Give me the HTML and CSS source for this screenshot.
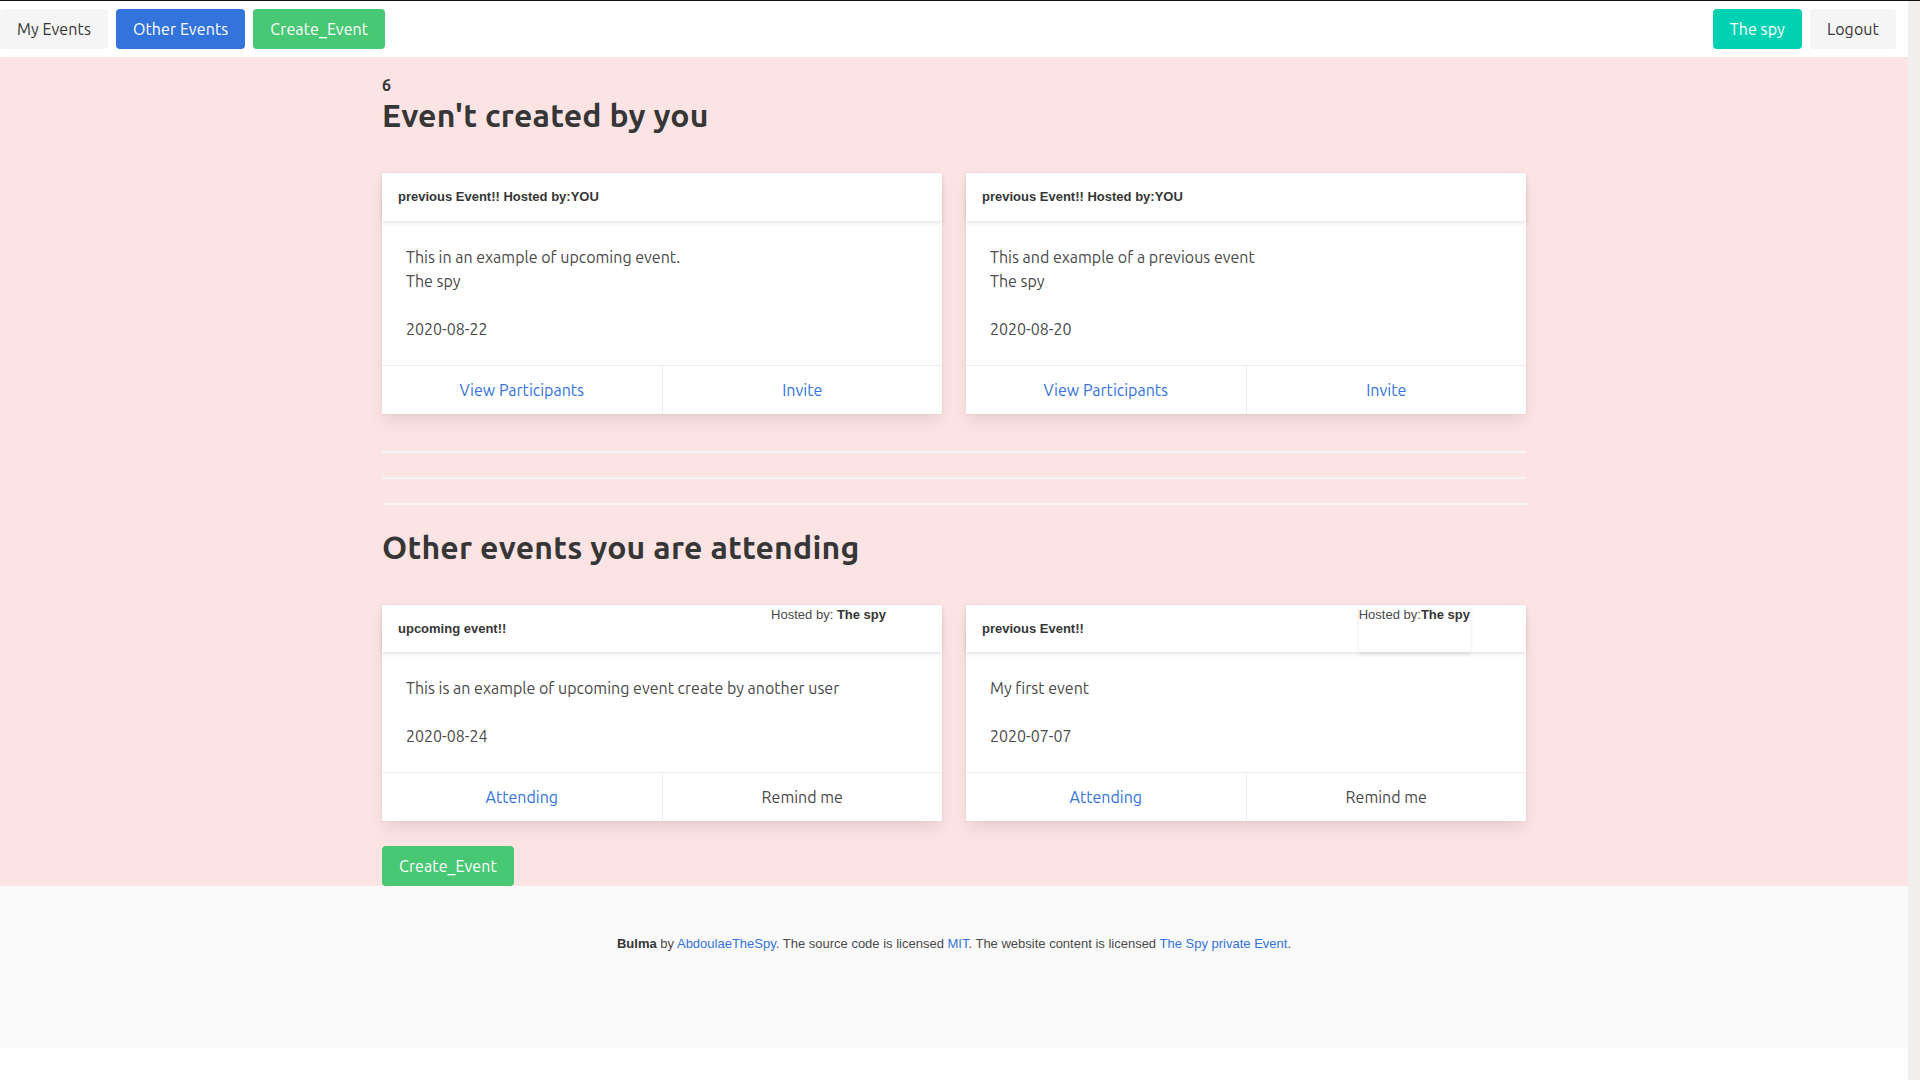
FILE: index.html
```html
<!DOCTYPE html>
<html lang="en">
<head>
<meta charset="utf-8">
<title>Events</title>
<link rel="stylesheet" href="styles.css">
</head>
<body>
<nav class="navbar">
  <div class="nav-group">
    <a class="btn btn-light">My Events</a>
    <a class="btn btn-link">Other Events</a>
    <a class="btn btn-success">Create_Event</a>
  </div>
  <div class="nav-group">
    <a class="btn btn-primary">The spy</a>
    <a class="btn btn-light">Logout</a>
  </div>
</nav>

<section class="page">
  <div class="container">
    <p class="count">6</p>
    <h1 class="title">Even't created by you</h1>

    <div class="cards">
      <div class="card">
        <header class="card-header">
          <p class="card-header-title">previous Event!! Hosted by:YOU</p>
        </header>
        <div class="card-content">
          This in an example of upcoming event.<br>The spy<br><br>2020-08-22
        </div>
        <footer class="card-footer">
          <a class="card-footer-item link">View Participants</a>
          <a class="card-footer-item link">Invite</a>
        </footer>
      </div>
      <div class="card">
        <header class="card-header">
          <p class="card-header-title">previous Event!! Hosted by:YOU</p>
        </header>
        <div class="card-content">
          This and example of a previous event<br>The spy<br><br>2020-08-20
        </div>
        <footer class="card-footer">
          <a class="card-footer-item link">View Participants</a>
          <a class="card-footer-item link">Invite</a>
        </footer>
      </div>
    </div>

    <div class="dividers">
      <hr class="divider">
      <hr class="divider">
      <hr class="divider">
    </div>

    <h1 class="title">Other events you are attending</h1>

    <div class="cards">
      <div class="card">
        <header class="card-header">
          <p class="card-header-title">upcoming event!!</p>
          <div class="host">Hosted by: <b>The spy</b></div>
        </header>
        <div class="card-content">
          This is an example of upcoming event create by another user<br><br>2020-08-24
        </div>
        <footer class="card-footer">
          <a class="card-footer-item link">Attending</a>
          <a class="card-footer-item">Remind me</a>
        </footer>
      </div>
      <div class="card">
        <header class="card-header">
          <p class="card-header-title">previous Event!!</p>
          <div class="host host-box">Hosted by:<b>The spy</b></div>
        </header>
        <div class="card-content">
          My first event<br><br>2020-07-07
        </div>
        <footer class="card-footer">
          <a class="card-footer-item link">Attending</a>
          <a class="card-footer-item">Remind me</a>
        </footer>
      </div>
    </div>

    <a class="btn btn-success create-bottom">Create_Event</a>
  </div>
</section>

<footer class="footer">
  <p><strong>Bulma</strong> by <a class="link">AbdoulaeTheSpy</a>. The source code is licensed <a class="link">MIT</a>. The website content is licensed <a class="link">The Spy private Event</a>.</p>
</footer>
</body>
</html>
```

FILE: styles.css
```css
html {
  background: #f0efee;
  border-top: 1px solid #111;
}

body {
  margin: 0;
  width: 1908px;
  min-height: calc(100vh - 1px);
  background: #fff;
  font-family: Ubuntu, Lato, "Noto Sans", sans-serif;
  font-size: 16px;
  line-height: 1.5;
  color: #4a4a4a;
}

p, h1 { margin: 0; }

a { text-decoration: none; cursor: pointer; }

.link { color: #3273dc; }

/* Navbar */
.navbar {
  height: 56px;
  display: flex;
  align-items: center;
  justify-content: space-between;
  padding-right: 12px;
  background: #fff;
}

.nav-group {
  display: flex;
  gap: 8px;
}

.btn {
  box-sizing: border-box;
  height: 40px;
  display: inline-flex;
  align-items: center;
  justify-content: center;
  padding: 0 16px;
  border: 1px solid transparent;
  border-radius: 4px;
  font-size: 16px;
  line-height: 1.5;
  letter-spacing: 0.1px;
}

.btn-light { background: #f5f5f5; color: #363636; }
.btn-link { background: #3273dc; color: #fff; }
.btn-success { background: #48c774; color: #fff; }
.btn-primary { background: #00d1b2; color: #fff; }

/* Page */
.page {
  background: #fde4e4;
  padding-top: 16px;
}

.container {
  width: 1144px;
  margin: 0 auto;
}

.count {
  font-size: 16px;
  line-height: 24px;
  font-weight: 700;
  color: #363636;
}

.title {
  font-size: 32px;
  line-height: 36px;
  font-weight: 700;
  letter-spacing: 0.2px;
  color: #363636;
  margin-bottom: 40px;
}

.cards {
  display: grid;
  grid-template-columns: 1fr 1fr;
  gap: 24px;
}

.card {
  background: #fff;
  box-shadow: 0 8px 16px -2px rgba(10, 10, 10, 0.1), 0 0 0 1px rgba(10, 10, 10, 0.02);
}

.card-header {
  display: flex;
  align-items: stretch;
  height: 47.5px;
  box-shadow: 0 2px 4px rgba(10, 10, 10, 0.1);
}

.card-header-title {
  flex: 1;
  display: flex;
  align-items: center;
  padding: 0 16px;
  font-family: "Liberation Sans", Arial, sans-serif;
  font-size: 13px;
  font-weight: 700;
  color: #363636;
}

.host {
  align-self: flex-start;
  margin-right: 56px;
  font-family: "Liberation Sans", Arial, sans-serif;
  font-size: 13px;
  line-height: 19.5px;
  color: #4a4a4a;
}

.host b { color: #363636; }

.host-box {
  align-self: stretch;
  background: #fff;
  box-shadow: 0 2px 4px rgba(10, 10, 10, 0.1);
}

.card-content {
  padding: 24px;
}

.card-footer {
  display: flex;
  border-top: 1px solid #ededed;
}

.card-footer-item {
  flex: 1;
  padding: 12px;
  text-align: center;
  line-height: 24px;
  color: #4a4a4a;
}

.card-footer-item.link { color: #3273dc; }

.card-footer-item + .card-footer-item {
  border-left: 1px solid #ededed;
}

.dividers {
  display: flex;
  flex-direction: column;
  gap: 24px;
  margin: 37.5px 0 23.5px;
}

.divider {
  height: 2px;
  margin: 0;
  border: none;
  background: #f5f5f5;
}

.create-bottom {
  margin-top: 24.5px;
}

/* Footer */
.footer {
  background: #fafafa;
  padding: 48px 24px 95px;
  text-align: center;
  font-family: "Liberation Sans", Arial, sans-serif;
  font-size: 13px;
  line-height: 19.5px;
  color: #4a4a4a;
}

.footer strong { color: #363636; }
```
